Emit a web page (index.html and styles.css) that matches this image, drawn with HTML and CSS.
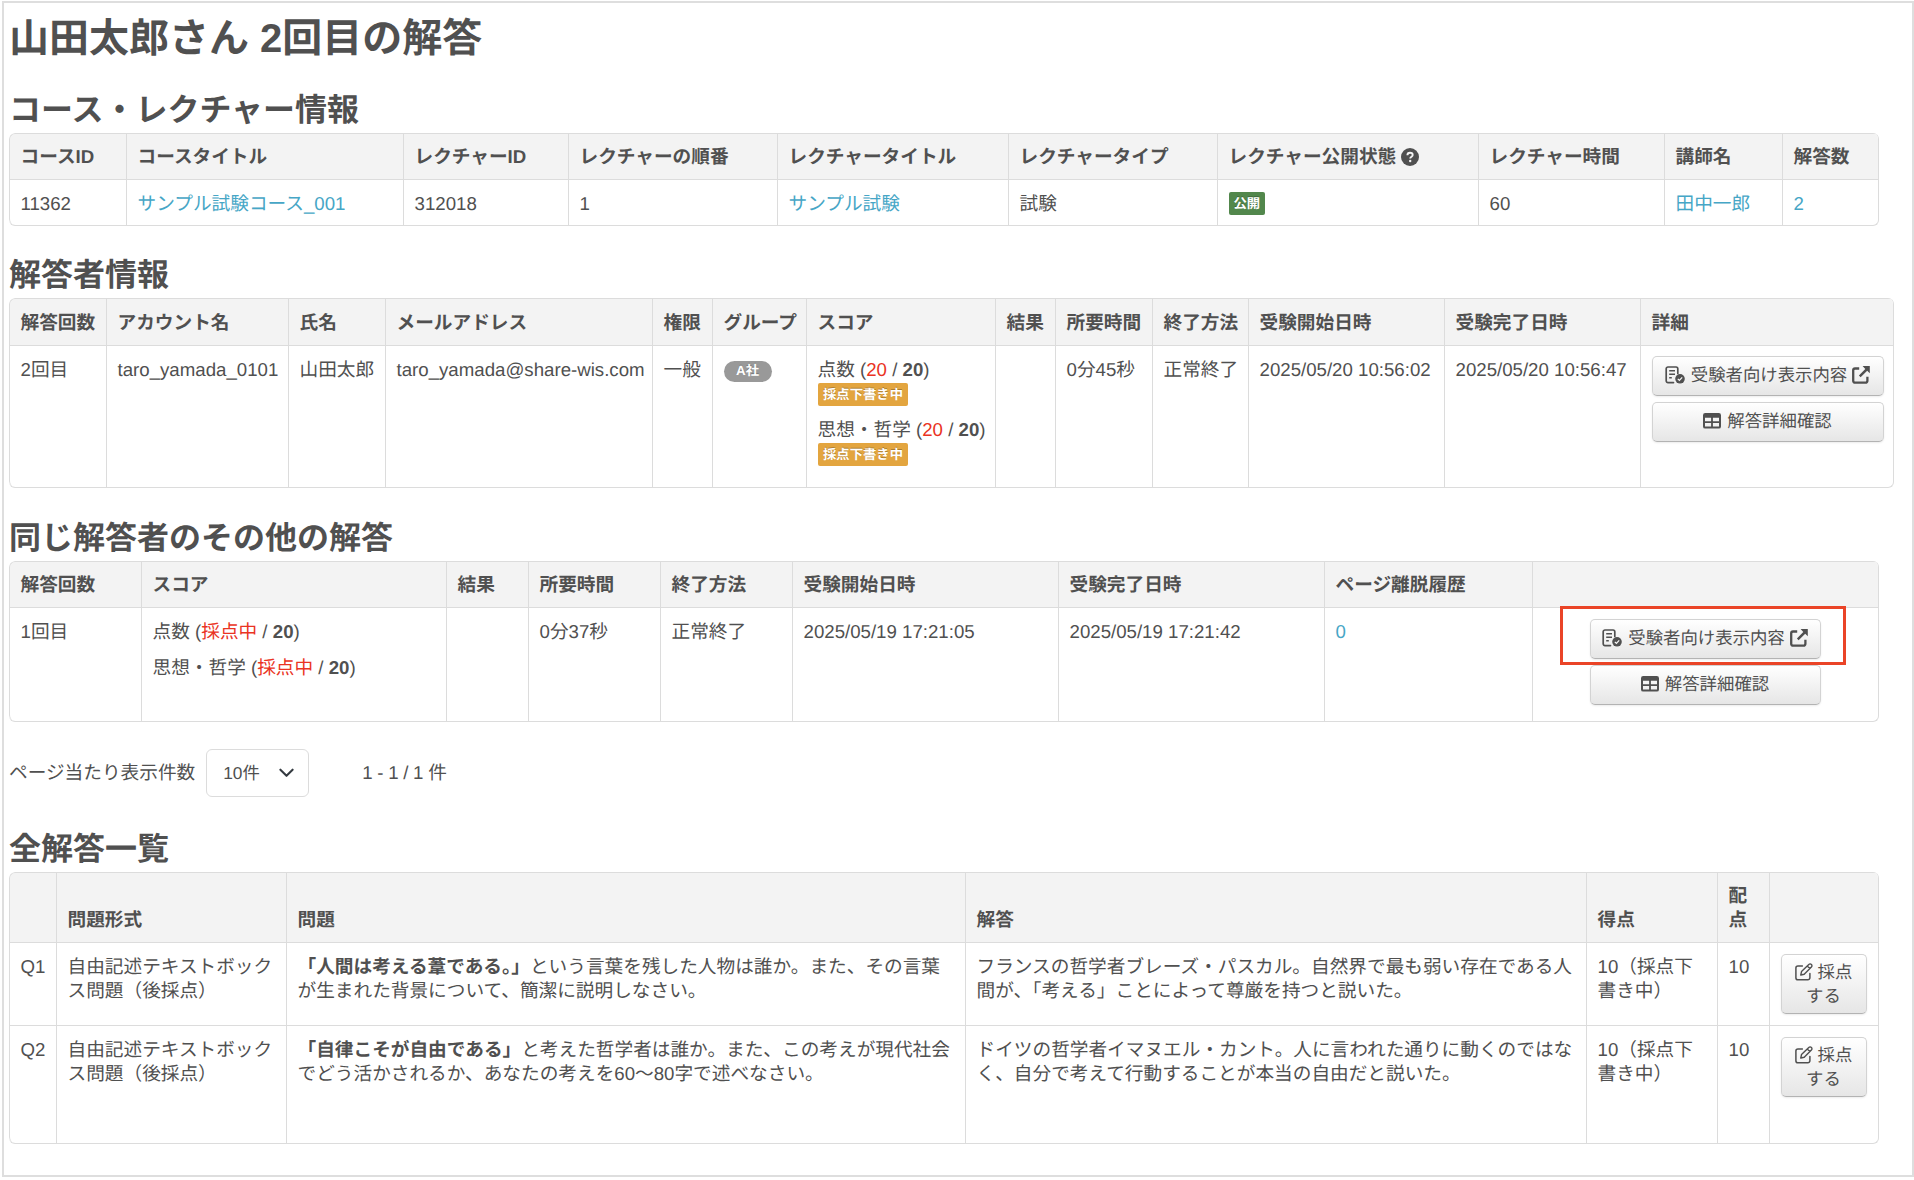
FILE: index.html
```html
<!DOCTYPE html>
<html lang="ja">
<head>
    <meta charset="UTF-8">
    <title>山田太郎さん 2回目の解答</title>
    <link rel="stylesheet" href="styles.css">
</head>
<body>
<svg class="sprite">
    <symbol id="icon-question" viewBox="0 0 18 18">
        <circle cx="9" cy="9" r="9" fill="currentColor"/>
        <path d="M6.4 7.2C6.4 5.6 7.5 4.7 9 4.7S11.7 5.6 11.7 7C11.7 8.7 9.2 8.7 9.2 10.6" fill="none" stroke="#f3f3f3" stroke-width="1.9"/>
        <circle cx="9.2" cy="13" r="1.2" fill="#f3f3f3"/>
    </symbol>
    <symbol id="icon-list-check" viewBox="0 0 20 18">
        <path d="M8.5 16.6H3A1.8 1.8 0 0 1 1.2 14.8V2.8A1.8 1.8 0 0 1 3 1H11A1.8 1.8 0 0 1 12.8 2.8V7.5" fill="none" stroke="currentColor" stroke-width="1.7" stroke-linecap="round"/>
        <path d="M4.2 4.7H10M4.2 8.2H10M4.2 11.7H6.8" fill="none" stroke="currentColor" stroke-width="1.5"/>
        <circle cx="15" cy="12.8" r="4.8" fill="currentColor"/>
        <path d="M12.8 12.9L14.4 14.4L17.2 11.4" fill="none" stroke="#f6f6f6" stroke-width="1.3"/>
    </symbol>
    <symbol id="icon-external" viewBox="0 0 18 18">
        <path d="M7.2 2.5H3A1.8 1.8 0 0 0 1.2 4.3V14.8A1.8 1.8 0 0 0 3 16.6H13.6A1.8 1.8 0 0 0 15.4 14.8V10.8" fill="none" stroke="currentColor" stroke-width="2.3"/>
        <path d="M10.6 0H17.8V7.2L15.2 4.7L8.6 11.3L6.9 9.6L13.3 3Z" fill="currentColor"/>
    </symbol>
    <symbol id="icon-table" viewBox="0 0 18 16">
        <path d="M2.2 0H15.8A2.2 2.2 0 0 1 18 2.2V13.4A2.2 2.2 0 0 1 15.8 15.6H2.2A2.2 2.2 0 0 1 0 13.4V2.2A2.2 2.2 0 0 1 2.2 0ZM2 4.8V8.2H8.1V4.8ZM9.9 4.8V8.2H16V4.8ZM2 10V13.6H8.1V10ZM9.9 10V13.6H16V10Z" fill="currentColor" fill-rule="evenodd"/>
    </symbol>
    <symbol id="icon-edit" viewBox="0 0 18 18">
        <path d="M7.4 2.9H3A2.1 2.1 0 0 0 .9 5V14.7A2.1 2.1 0 0 0 3 16.8H12.8A2.1 2.1 0 0 0 14.9 14.7V10.4" fill="none" stroke="currentColor" stroke-width="1.5" stroke-linecap="round"/>
        <path d="M5.8 12L6.5 8.6L13.8 1.4A1.8 1.8 0 0 1 16.4 4L9.2 11.3ZM12.2 3L14.9 5.6" fill="none" stroke="currentColor" stroke-width="1.4" stroke-linejoin="round"/>
    </symbol>
</svg>
<div class="page">
    <h1>山田太郎さん 2回目の解答</h1>

    <h2>コース・レクチャー情報</h2>
    <table class="table course">
        <colgroup><col><col><col><col><col><col><col><col><col><col></colgroup>
        <thead>
        <tr>
            <th>コースID</th>
            <th>コースタイトル</th>
            <th>レクチャーID</th>
            <th>レクチャーの順番</th>
            <th>レクチャータイトル</th>
            <th>レクチャータイプ</th>
            <th>レクチャー公開状態 <svg class="icon-question"><use href="#icon-question"/></svg></th>
            <th>レクチャー時間</th>
            <th>講師名</th>
            <th>解答数</th>
        </tr>
        </thead>
        <tbody>
        <tr>
            <td>11362</td>
            <td><a href="#">サンプル試験コース_001</a></td>
            <td>312018</td>
            <td>1</td>
            <td><a href="#">サンプル試験</a></td>
            <td>試験</td>
            <td><span class="label label-success">公開</span></td>
            <td>60</td>
            <td><a href="#">田中一郎</a></td>
            <td><a href="#">2</a></td>
        </tr>
        </tbody>
    </table>

    <h2>解答者情報</h2>
    <table class="table examinee">
        <colgroup><col><col><col><col><col><col><col><col><col><col><col><col><col></colgroup>
        <thead>
        <tr>
            <th>解答回数</th>
            <th>アカウント名</th>
            <th>氏名</th>
            <th>メールアドレス</th>
            <th>権限</th>
            <th>グループ</th>
            <th>スコア</th>
            <th>結果</th>
            <th>所要時間</th>
            <th>終了方法</th>
            <th>受験開始日時</th>
            <th>受験完了日時</th>
            <th>詳細</th>
        </tr>
        </thead>
        <tbody>
        <tr>
            <td>2回目</td>
            <td>taro_yamada_0101</td>
            <td>山田太郎</td>
            <td>taro_yamada@share-wis.com</td>
            <td>一般</td>
            <td><span class="badge">A社</span></td>
            <td>
                <p>点数 (<span class="red">20</span> / <b>20</b>)<br><span class="label label-warning">採点下書き中</span></p>
                <p>思想・哲学 (<span class="red">20</span> / <b>20</b>)<br><span class="label label-warning">採点下書き中</span></p>
            </td>
            <td></td>
            <td>0分45秒</td>
            <td>正常終了</td>
            <td>2025/05/20 10:56:02</td>
            <td>2025/05/20 10:56:47</td>
            <td>
                <div class="btns">
                    <a class="btn"><svg class="icon-list"><use href="#icon-list-check"/></svg>受験者向け表示内容<svg class="icon-ext"><use href="#icon-external"/></svg></a>
                    <a class="btn"><svg class="icon-table"><use href="#icon-table"/></svg>解答詳細確認</a>
                </div>
            </td>
        </tr>
        </tbody>
    </table>

    <h2>同じ解答者のその他の解答</h2>
    <table class="table others">
        <colgroup><col><col><col><col><col><col><col><col><col></colgroup>
        <thead>
        <tr>
            <th>解答回数</th>
            <th>スコア</th>
            <th>結果</th>
            <th>所要時間</th>
            <th>終了方法</th>
            <th>受験開始日時</th>
            <th>受験完了日時</th>
            <th>ページ離脱履歴</th>
            <th></th>
        </tr>
        </thead>
        <tbody>
        <tr>
            <td>1回目</td>
            <td>
                <p>点数 (<span class="red">採点中</span> / <b>20</b>)</p>
                <p>思想・哲学 (<span class="red">採点中</span> / <b>20</b>)</p>
            </td>
            <td></td>
            <td>0分37秒</td>
            <td>正常終了</td>
            <td>2025/05/19 17:21:05</td>
            <td>2025/05/19 17:21:42</td>
            <td><a href="#">0</a></td>
            <td>
                <div class="btns">
                    <a class="btn"><svg class="icon-list"><use href="#icon-list-check"/></svg>受験者向け表示内容<svg class="icon-ext"><use href="#icon-external"/></svg></a>
                    <a class="btn"><svg class="icon-table"><use href="#icon-table"/></svg>解答詳細確認</a>
                    <div class="marker"></div>
                </div>
            </td>
        </tr>
        </tbody>
    </table>

    <div class="pager">
        <span>ページ当たり表示件数</span>
        <div class="select">
            <span>10件</span>
            <svg viewBox="0 0 16 10"><path d="M1.5 1.5L8 8L14.5 1.5" fill="none" stroke="#343a40" stroke-width="2.2" stroke-linecap="round" stroke-linejoin="round"/></svg>
        </div>
        <span class="count">1 - 1 / 1 件</span>
    </div>

    <h2>全解答一覧</h2>
    <table class="table answers">
        <colgroup><col><col><col><col><col><col><col></colgroup>
        <thead>
        <tr>
            <th></th>
            <th>問題形式</th>
            <th>問題</th>
            <th>解答</th>
            <th>得点</th>
            <th>配点</th>
            <th></th>
        </tr>
        </thead>
        <tbody>
        <tr>
            <td>Q1</td>
            <td>自由記述テキストボックス問題（後採点）</td>
            <td><b>「人間は考える葦である。」</b>という言葉を残した人物は誰か。また、その言葉が生まれた背景について、簡潔に説明しなさい。</td>
            <td>フランスの哲学者ブレーズ・パスカル。自然界で最も弱い存在である人間が、「考える」ことによって尊厳を持つと説いた。</td>
            <td>10（採点下書き中）</td>
            <td>10</td>
            <td><a class="btn btn-score"><svg class="icon-edit"><use href="#icon-edit"/></svg> 採点する</a></td>
        </tr>
        <tr>
            <td>Q2</td>
            <td>自由記述テキストボックス問題（後採点）</td>
            <td><b>「自律こそが自由である」</b>と考えた哲学者は誰か。また、この考えが現代社会でどう活かされるか、あなたの考えを60〜80字で述べなさい。</td>
            <td>ドイツの哲学者イマヌエル・カント。人に言われた通りに動くのではなく、自分で考えて行動することが本当の自由だと説いた。</td>
            <td>10（採点下書き中）</td>
            <td>10</td>
            <td><a class="btn btn-score"><svg class="icon-edit"><use href="#icon-edit"/></svg> 採点する</a></td>
        </tr>
        </tbody>
    </table>
</div>
</body>
</html>
```
FILE: styles.css
```css
* {
    box-sizing: border-box;
    margin: 0;
    padding: 0;
}

body {
    background-color: #fff;
    color: #505050;
    font-family: "Liberation Sans", "Noto Sans CJK JP", sans-serif;
    font-size: 18.67px;
    line-height: 24px;
    text-rendering: geometricPrecision;
}

a {
    color: #46a6c6;
    text-decoration: none;
}

.sprite {
    display: none;
}

.page {
    width: 1912px;
    height: 1176px;
    margin: 1px 0 0 2px;
    padding: 9px 5px 0;
    border: 2px solid #dedede;
}

h1 {
    height: 54px;
    font-size: 40px;
    line-height: 54px;
    margin-bottom: 19px;
}

h2 {
    height: 48px;
    font-size: 32px;
    line-height: 50px;
}

/* tables */
.table {
    table-layout: fixed;
    border-collapse: separate;
    border-spacing: 0;
    width: 1870px;
    margin-bottom: 24px;
    border-right: 1px solid #dcdcdc;
    border-bottom: 1px solid #dcdcdc;
    border-radius: 6px;
    overflow: hidden;
}

.table th,
.table td {
    padding: 12px 0 0 10.5px;
    border-top: 1px solid #dcdcdc;
    border-left: 1px solid #dcdcdc;
    text-align: left;
    vertical-align: top;
}

.table th {
    padding: 0 10.5px 10px;
    background-color: #f3f3f3;
    vertical-align: bottom;
    white-space: nowrap;
}

.table th:first-child {
    border-top-left-radius: 6px;
}

.table tr:last-child td:first-child {
    border-bottom-left-radius: 6px;
}

.table thead tr {
    height: 46px;
}

.table p {
    margin-bottom: 12px;
}

.course col:nth-child(1) { width: 117px; }
.course col:nth-child(2) { width: 277px; }
.course col:nth-child(3) { width: 165px; }
.course col:nth-child(4) { width: 209px; }
.course col:nth-child(5) { width: 231px; }
.course col:nth-child(6) { width: 209px; }
.course col:nth-child(7) { width: 261px; }
.course col:nth-child(8) { width: 186px; }
.course col:nth-child(9) { width: 118px; }
.course col:nth-child(10) { width: 96px; }
.course tbody tr { height: 46px; }

.examinee {
    width: 1885px;
    margin-bottom: 25px;
}
.examinee col:nth-child(1) { width: 97px; }
.examinee col:nth-child(2) { width: 182px; }
.examinee col:nth-child(3) { width: 97px; }
.examinee col:nth-child(4) { width: 267px; }
.examinee col:nth-child(5) { width: 60px; }
.examinee col:nth-child(6) { width: 94px; }
.examinee col:nth-child(7) { width: 189px; }
.examinee col:nth-child(8) { width: 60px; }
.examinee col:nth-child(9) { width: 97px; }
.examinee col:nth-child(10) { width: 96px; }
.examinee col:nth-child(11) { width: 196px; }
.examinee col:nth-child(12) { width: 196px; }
.examinee col:nth-child(13) { width: 253px; }
.examinee thead tr { height: 47px; }
.examinee tbody tr { height: 142px; }

.others { margin-bottom: 27px; }
.others col:nth-child(1) { width: 132px; }
.others col:nth-child(2) { width: 305px; }
.others col:nth-child(3) { width: 82px; }
.others col:nth-child(4) { width: 132px; }
.others col:nth-child(5) { width: 132px; }
.others col:nth-child(6) { width: 266px; }
.others col:nth-child(7) { width: 266px; }
.others col:nth-child(8) { width: 208px; }
.others col:nth-child(9) { width: 346px; }
.others tbody tr { height: 114px; }

.answers col:nth-child(1) { width: 47px; }
.answers col:nth-child(2) { width: 230px; }
.answers col:nth-child(3) { width: 679px; }
.answers col:nth-child(4) { width: 621px; }
.answers col:nth-child(5) { width: 131px; }
.answers col:nth-child(6) { width: 52px; }
.answers col:nth-child(7) { width: 109px; }
.answers thead tr { height: 70px; }
.answers tbody tr { height: 83px; }
.answers tbody tr:last-child { height: 118px; }
.answers th { white-space: normal; }
.answers td { padding-right: 10.5px; }

.red {
    color: #ea3323;
}

/* labels */
.label {
    display: inline-block;
    height: 23px;
    padding: 0 5px;
    border-radius: 2px;
    color: #fff;
    font-size: 13.33px;
    font-weight: bold;
    line-height: 23px;
    text-shadow: 0 -1px 0 rgba(0, 0, 0, .25);
    vertical-align: top;
}

.label-success {
    background-color: #52874c;
}

.label-warning {
    margin-top: 1px;
    padding: 0 5.5px;
    background-color: #e3a53f;
}

.table p .label {
    margin-bottom: -1px;
}

.badge {
    display: block;
    width: 48px;
    height: 21px;
    margin-top: 3px;
    border-radius: 11px;
    background-color: #999;
    color: #fff;
    font-size: 13.33px;
    font-weight: bold;
    line-height: 20px;
    text-align: center;
    text-shadow: 0 -1px 0 rgba(0, 0, 0, .25);
}

.icon-question {
    width: 18px;
    height: 18px;
    vertical-align: -3px;
}

/* buttons */
.btns {
    display: flex;
    flex-direction: column;
    gap: 6px;
    position: relative;
    width: 232px;
    margin-top: -2px;
}

.others .btns {
    width: 231px;
    margin: -1px 0 0 46px;
}

.btn {
    display: flex;
    justify-content: center;
    align-items: center;
    height: 40px;
    padding-bottom: 3px;
    border: 1px solid #d3d3d3;
    border-bottom-color: #b3b3b3;
    border-radius: 5px;
    background-image: linear-gradient(to bottom, #fff, #e6e6e6);
    box-shadow: 0 1px 2px rgba(0, 0, 0, .08);
    color: #505050;
    font-size: 17.4px;
}

.btn svg {
    flex: none;
}

.icon-list {
    width: 20px;
    height: 18px;
    margin-right: 6px;
}

.icon-ext {
    width: 18px;
    height: 18px;
    margin-left: 5px;
}

.icon-table {
    width: 18px;
    height: 16px;
    margin-right: 6px;
}

.btn-score {
    display: block;
    width: 86px;
    height: 60px;
    margin-top: -1px;
    padding: 5px 12px 0;
    text-align: center;
}

.icon-edit {
    width: 18px;
    height: 18px;
    vertical-align: -3px;
}

/* red frame around the first button */
.marker {
    position: absolute;
    top: -13px;
    left: -30px;
    width: 286px;
    height: 59px;
    border: 3px solid #ea4427;
}

/* pager */
.pager {
    display: flex;
    align-items: center;
    height: 48px;
    margin-bottom: 27px;
}

.select {
    display: flex;
    justify-content: space-between;
    align-items: center;
    width: 103px;
    height: 48px;
    margin: 0 53px 0 11px;
    padding: 0 14px 0 16px;
    border: 1px solid #dcdcdc;
    border-radius: 6px;
    font-size: 17.33px;
}

.select svg {
    width: 15px;
    height: 10px;
}

.count {
    word-spacing: -.5px;
}
```
